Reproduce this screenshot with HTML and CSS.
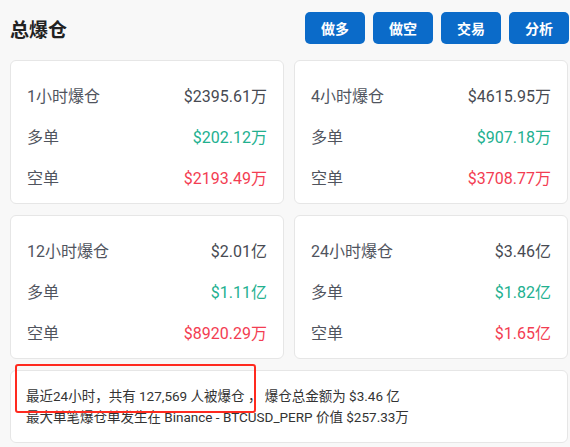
FILE: index.html
```html
<!DOCTYPE html>
<html lang="zh">
<head>
<meta charset="utf-8">
<link rel="stylesheet" href="styles.css">
</head>
<body>
<div class="page">
  <div class="header">
    <h1 class="title">总爆仓</h1>
    <div class="actions">
      <button class="btn">做多</button>
      <button class="btn">做空</button>
      <button class="btn">交易</button>
      <button class="btn">分析</button>
    </div>
  </div>
  <div class="grid">
    <div class="card">
      <div class="row"><span class="label">1小时爆仓</span><span class="val">$2395.61万</span></div>
      <div class="row"><span class="label">多单</span><span class="val up">$202.12万</span></div>
      <div class="row"><span class="label">空单</span><span class="val down">$2193.49万</span></div>
    </div>
    <div class="card">
      <div class="row"><span class="label">4小时爆仓</span><span class="val">$4615.95万</span></div>
      <div class="row"><span class="label">多单</span><span class="val up">$907.18万</span></div>
      <div class="row"><span class="label">空单</span><span class="val down">$3708.77万</span></div>
    </div>
    <div class="card">
      <div class="row"><span class="label">12小时爆仓</span><span class="val">$2.01亿</span></div>
      <div class="row"><span class="label">多单</span><span class="val up">$1.11亿</span></div>
      <div class="row"><span class="label">空单</span><span class="val down">$8920.29万</span></div>
    </div>
    <div class="card">
      <div class="row"><span class="label">24小时爆仓</span><span class="val">$3.46亿</span></div>
      <div class="row"><span class="label">多单</span><span class="val up">$1.82亿</span></div>
      <div class="row"><span class="label">空单</span><span class="val down">$1.65亿</span></div>
    </div>
  </div>
  <div class="summary">
    <p class="line">最近24小时，共有 127,569 人被爆仓 ， 爆仓总金额为 $3.46 亿</p>
    <p class="line">最大单笔爆仓单发生在 Binance - BTCUSD_PERP 价值 $257.33万</p>
    <div class="highlight"></div>
  </div>
</div>
</body>
</html>
```

FILE: styles.css
```css
html, body {
  margin: 0;
  padding: 0;
  background: #f8f8f8;
}
body {
  font-family: Roboto, "Noto Sans CJK SC", sans-serif;
  color: #333;
}
.page {
  padding: 12px 1px 0 10px;
}
.header {
  display: flex;
  justify-content: space-between;
  align-items: center;
  height: 32px;
}
.title {
  margin: 0;
  font-size: 19px;
  font-weight: 700;
  color: #222;
  font-family: "Noto Sans CJK SC", sans-serif;
}
.actions {
  display: flex;
  gap: 8px;
}
.btn {
  width: 60px;
  height: 32px;
  border: none;
  border-radius: 5px;
  background: #0b6bc9;
  color: #fff;
  font-family: "Noto Sans CJK SC", sans-serif;
  font-size: 14px;
  font-weight: 700;
  padding: 0;
}
.grid {
  margin-top: 16px;
  margin-right: 1px;
  display: grid;
  grid-template-columns: 1fr 1fr;
  gap: 11px 10px;
}
.card {
  background: #fff;
  border: 1px solid #e6e6e6;
  border-radius: 6px;
  padding: 13px 16px 6px 16px;
}
.row {
  display: flex;
  justify-content: space-between;
  align-items: center;
  height: 41px;
  font-size: 16px;
}
.label {
  color: #50545e;
}
.val {
  color: #474a52;
}
.up {
  color: #22b08f;
}
.down {
  color: #f33d52;
}
.summary {
  position: relative;
  margin-top: 11px;
  margin-right: 1px;
  background: #fff;
  border: 1px solid #e6e6e6;
  border-radius: 6px;
  padding: 15px 15px 14px 15px;
}
.line {
  margin: 0;
  font-size: 13.5px;
  line-height: 21px;
  color: #333;
}
.highlight {
  position: absolute;
  left: 4px;
  top: -7px;
  width: 237px;
  height: 45px;
  border: 2px solid #ff2a1f;
  border-radius: 3px;
}
```
